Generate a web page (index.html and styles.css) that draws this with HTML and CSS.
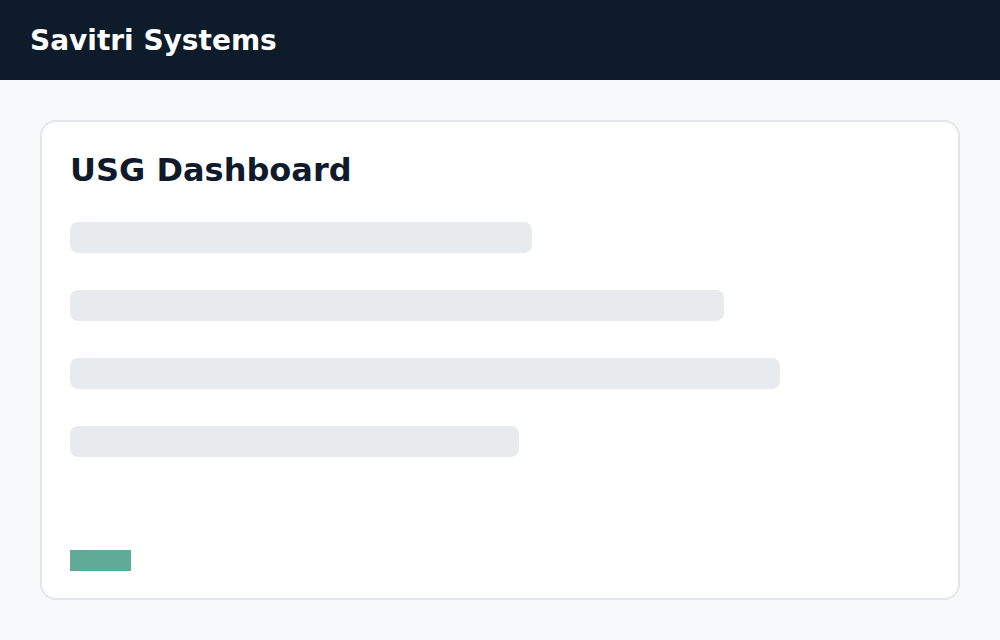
FILE: index.html
```html
<!DOCTYPE html>
<html lang="en">
<head>
    <meta charset="UTF-8">
    <meta name="viewport" content="width=device-width, initial-scale=1.0">
    <title>USG Dashboard</title>
    <link rel="stylesheet" href="styles.css">
</head>
<body>
    <header class="topbar">
        <span class="brand">Savitri Systems</span>
    </header>

    <main class="content">
        <section class="card">
            <h1>USG Dashboard</h1>

            <ul class="skeleton-list">
                <li class="skeleton-bar" style="width: 462px"></li>
                <li class="skeleton-bar" style="width: 654px"></li>
                <li class="skeleton-bar" style="width: 710px"></li>
                <li class="skeleton-bar" style="width: 449px"></li>
            </ul>

            <div class="status-chip"></div>
        </section>
    </main>
</body>
</html>
```

FILE: styles.css
```css
body {
    font-family: "DejaVu Sans", sans-serif;
    margin: 0;
    padding: 0;
    background-color: #f7f9fb;
    color: #0f1b2b;
}

.topbar {
    height: 80px;
    background-color: #0e1b2b;
    display: flex;
    align-items: center;
    padding: 0 30px;
}

.brand {
    color: #ffffff;
    font-size: 28px;
    font-weight: bold;
}

.content {
    padding: 40px;
}

.card {
    background-color: #ffffff;
    border: 2px solid #e2e6ea;
    border-radius: 16px;
    padding: 28px 28px 27px;
    height: 480px;
    box-sizing: border-box;
    display: flex;
    flex-direction: column;
}

.card h1 {
    margin: 0;
    font-size: 32px;
    line-height: 40px;
    color: #0f1b2b;
}

.skeleton-list {
    list-style-type: none;
    margin: 32px 0 0;
    padding: 0;
    display: flex;
    flex-direction: column;
    gap: 37px;
}

.skeleton-bar {
    height: 31px;
    border-radius: 8px;
    background-color: #e8ebee;
}

.status-chip {
    margin-top: auto;
    width: 61px;
    height: 21px;
    background-color: #5fab98;
}
```
